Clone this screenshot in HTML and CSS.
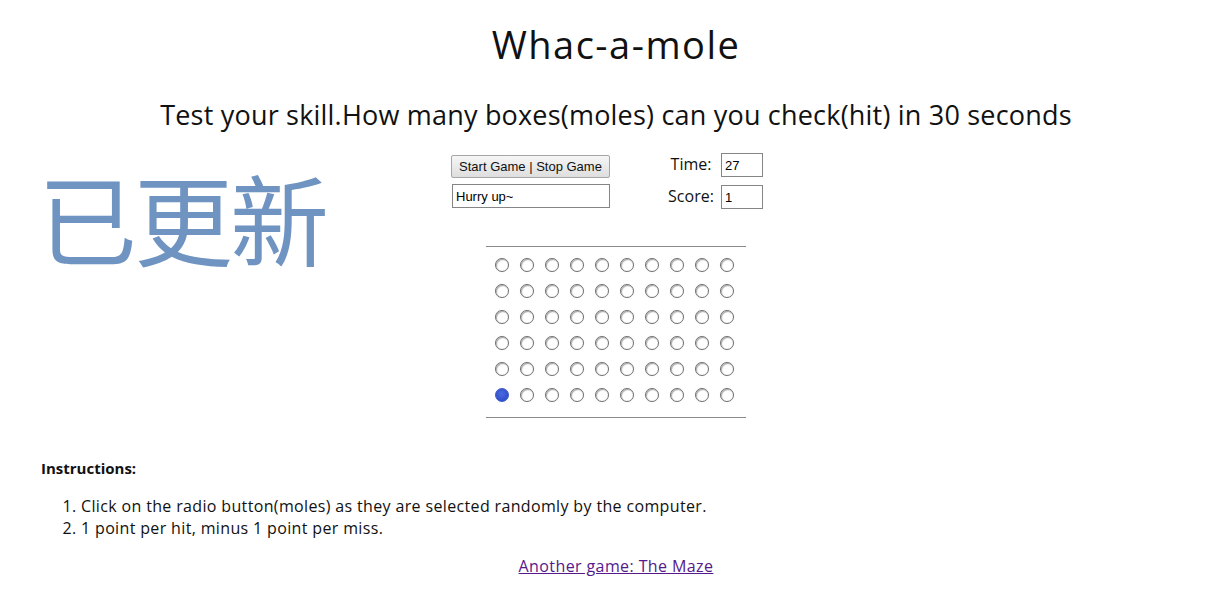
FILE: index.html
```html
<!DOCTYPE html>
<html lang="en">
<head>
<meta charset="utf-8">
<title>Whac-a-mole</title>
<link rel="stylesheet" href="styles.css">
</head>
<body>
<div class="page">
  <h1 class="title">Whac-a-mole</h1>
  <h2 class="subtitle">Test your skill.How many boxes(moles) can you check(hit) in 30 seconds</h2>

  <div class="stamp">已更新</div>

  <div class="controls">
    <div class="left-col">
      <button class="btn" type="button">Start Game | Stop Game</button>
      <input class="msg" type="text" value="Hurry up~">
    </div>
    <div class="right-col">
      <label class="field"><span class="lbl">Time:</span><input class="num" type="text" value="27"></label>
      <label class="field"><span class="lbl">Score:</span><input class="num" type="text" value="1"></label>
    </div>
  </div>

  <div class="board">
    <div class="grid">
      <input type="radio" class="mole"><input type="radio" class="mole"><input type="radio" class="mole"><input type="radio" class="mole"><input type="radio" class="mole"><input type="radio" class="mole"><input type="radio" class="mole"><input type="radio" class="mole"><input type="radio" class="mole"><input type="radio" class="mole">
      <input type="radio" class="mole"><input type="radio" class="mole"><input type="radio" class="mole"><input type="radio" class="mole"><input type="radio" class="mole"><input type="radio" class="mole"><input type="radio" class="mole"><input type="radio" class="mole"><input type="radio" class="mole"><input type="radio" class="mole">
      <input type="radio" class="mole"><input type="radio" class="mole"><input type="radio" class="mole"><input type="radio" class="mole"><input type="radio" class="mole"><input type="radio" class="mole"><input type="radio" class="mole"><input type="radio" class="mole"><input type="radio" class="mole"><input type="radio" class="mole">
      <input type="radio" class="mole"><input type="radio" class="mole"><input type="radio" class="mole"><input type="radio" class="mole"><input type="radio" class="mole"><input type="radio" class="mole"><input type="radio" class="mole"><input type="radio" class="mole"><input type="radio" class="mole"><input type="radio" class="mole">
      <input type="radio" class="mole"><input type="radio" class="mole"><input type="radio" class="mole"><input type="radio" class="mole"><input type="radio" class="mole"><input type="radio" class="mole"><input type="radio" class="mole"><input type="radio" class="mole"><input type="radio" class="mole"><input type="radio" class="mole">
      <input type="radio" class="mole" checked><input type="radio" class="mole"><input type="radio" class="mole"><input type="radio" class="mole"><input type="radio" class="mole"><input type="radio" class="mole"><input type="radio" class="mole"><input type="radio" class="mole"><input type="radio" class="mole"><input type="radio" class="mole">
    </div>
  </div>

  <div class="instructions">
    <h3 class="ins-title">Instructions:</h3>
    <ol class="ins-list">
      <li>Click on the radio button(moles) as they are selected randomly by the computer.</li>
      <li>1 point per hit, minus 1 point per miss.</li>
    </ol>
  </div>

  <p class="more"><a class="link" href="#maze">Another game: The Maze</a></p>
</div>
</body>
</html>
```

FILE: styles.css
```css
html, body {
  margin: 0;
  padding: 0;
  background: #fff;
}

body {
  font-family: "Open Sans", "DejaVu Sans", sans-serif;
  color: #111;
}

.page {
  position: relative;
  width: 1212px;
  margin-left: 10px;
}

.title {
  margin: 0;
  padding-top: 20px;
  font-size: 38px;
  line-height: 48px;
  font-weight: 400;
  letter-spacing: 1.5px;
  text-align: center;
}

.subtitle {
  margin: 0;
  padding-top: 30px;
  font-size: 27px;
  line-height: 34px;
  font-weight: 400;
  letter-spacing: 0.2px;
  text-align: center;
}

.stamp {
  position: absolute;
  left: 28px;
  top: 156px;
  font-family: "Noto Sans CJK SC", sans-serif;
  font-size: 99px;
  line-height: 120px;
  color: #7094c1;
  letter-spacing: -3px;
}

.controls {
  display: flex;
  justify-content: space-between;
  align-items: flex-start;
  width: 312px;
  margin: 23px 0 0 441px;
}

.left-col {
  display: flex;
  flex-direction: column;
  gap: 6px;
  width: 159px;
}

.btn {
  height: 23px;
  padding: 0 6px;
  font-family: "Liberation Sans", Arial, sans-serif;
  font-size: 13px;
  color: #111;
  background: linear-gradient(#f6f6f6, #dedede);
  border: 1px solid #a6a6a6;
  border-radius: 2px;
}

.msg {
  box-sizing: border-box;
  width: 158px;
  height: 24px;
  margin-left: 1px;
  padding: 0 3px;
  font-family: "Liberation Sans", Arial, sans-serif;
  font-size: 13px;
  color: #000;
  border: 1px solid #858585;
  border-radius: 0;
}

.right-col {
  display: flex;
  flex-direction: column;
  gap: 8px;
  margin-top: -2px;
}

.field {
  display: flex;
  align-items: center;
  gap: 4px;
  font-size: 16px;
}

.lbl {
  width: 52px;
  text-align: center;
  margin-top: -3px;
}

.num {
  box-sizing: border-box;
  width: 42px;
  height: 24px;
  padding: 0 3px;
  font-family: "Liberation Sans", Arial, sans-serif;
  font-size: 13px;
  color: #000;
  border: 1px solid #858585;
  border-radius: 0;
}

.board {
  box-sizing: border-box;
  width: 260px;
  margin: 37px 0 0 476px;
  border-top: 1px solid #8a8a8a;
  border-bottom: 1px solid #8a8a8a;
  padding: 5px 0 9px 3px;
}

.grid {
  display: grid;
  grid-template-columns: repeat(10, 25px);
  grid-auto-rows: 26px;
}

.mole {
  appearance: none;
  -webkit-appearance: none;
  box-sizing: border-box;
  width: 14px;
  height: 14px;
  margin: 6px 0 0 6px;
  border-radius: 50%;
  border: 1px solid #6f6f6f;
  background: radial-gradient(circle at 50% 60%, #fff 55%, #e2e2e2 100%);
  box-shadow: inset 1px 1px 1px rgba(0,0,0,0.3), 0 0 1px rgba(0,0,0,0.2);
}

.mole:checked {
  border-color: #3a56c9;
  background: radial-gradient(circle at 45% 40%, #4a6ae0, #3150cc 70%);
  box-shadow: none;
}

.instructions {
  padding-left: 31px;
  margin-top: 40px;
}

.ins-title {
  margin: 0;
  font-size: 15px;
  line-height: 20px;
  font-weight: 700;
}

.ins-list {
  margin: 17px 0 0 0;
  padding-left: 40px;
  font-size: 16px;
  line-height: 22px;
  letter-spacing: 0.35px;
}

.more {
  margin: 16px 0 0 0;
  text-align: center;
  font-size: 16px;
  line-height: 22px;
  letter-spacing: 0.4px;
}

.link {
  color: #551a8b;
  text-decoration: underline;
}
```
